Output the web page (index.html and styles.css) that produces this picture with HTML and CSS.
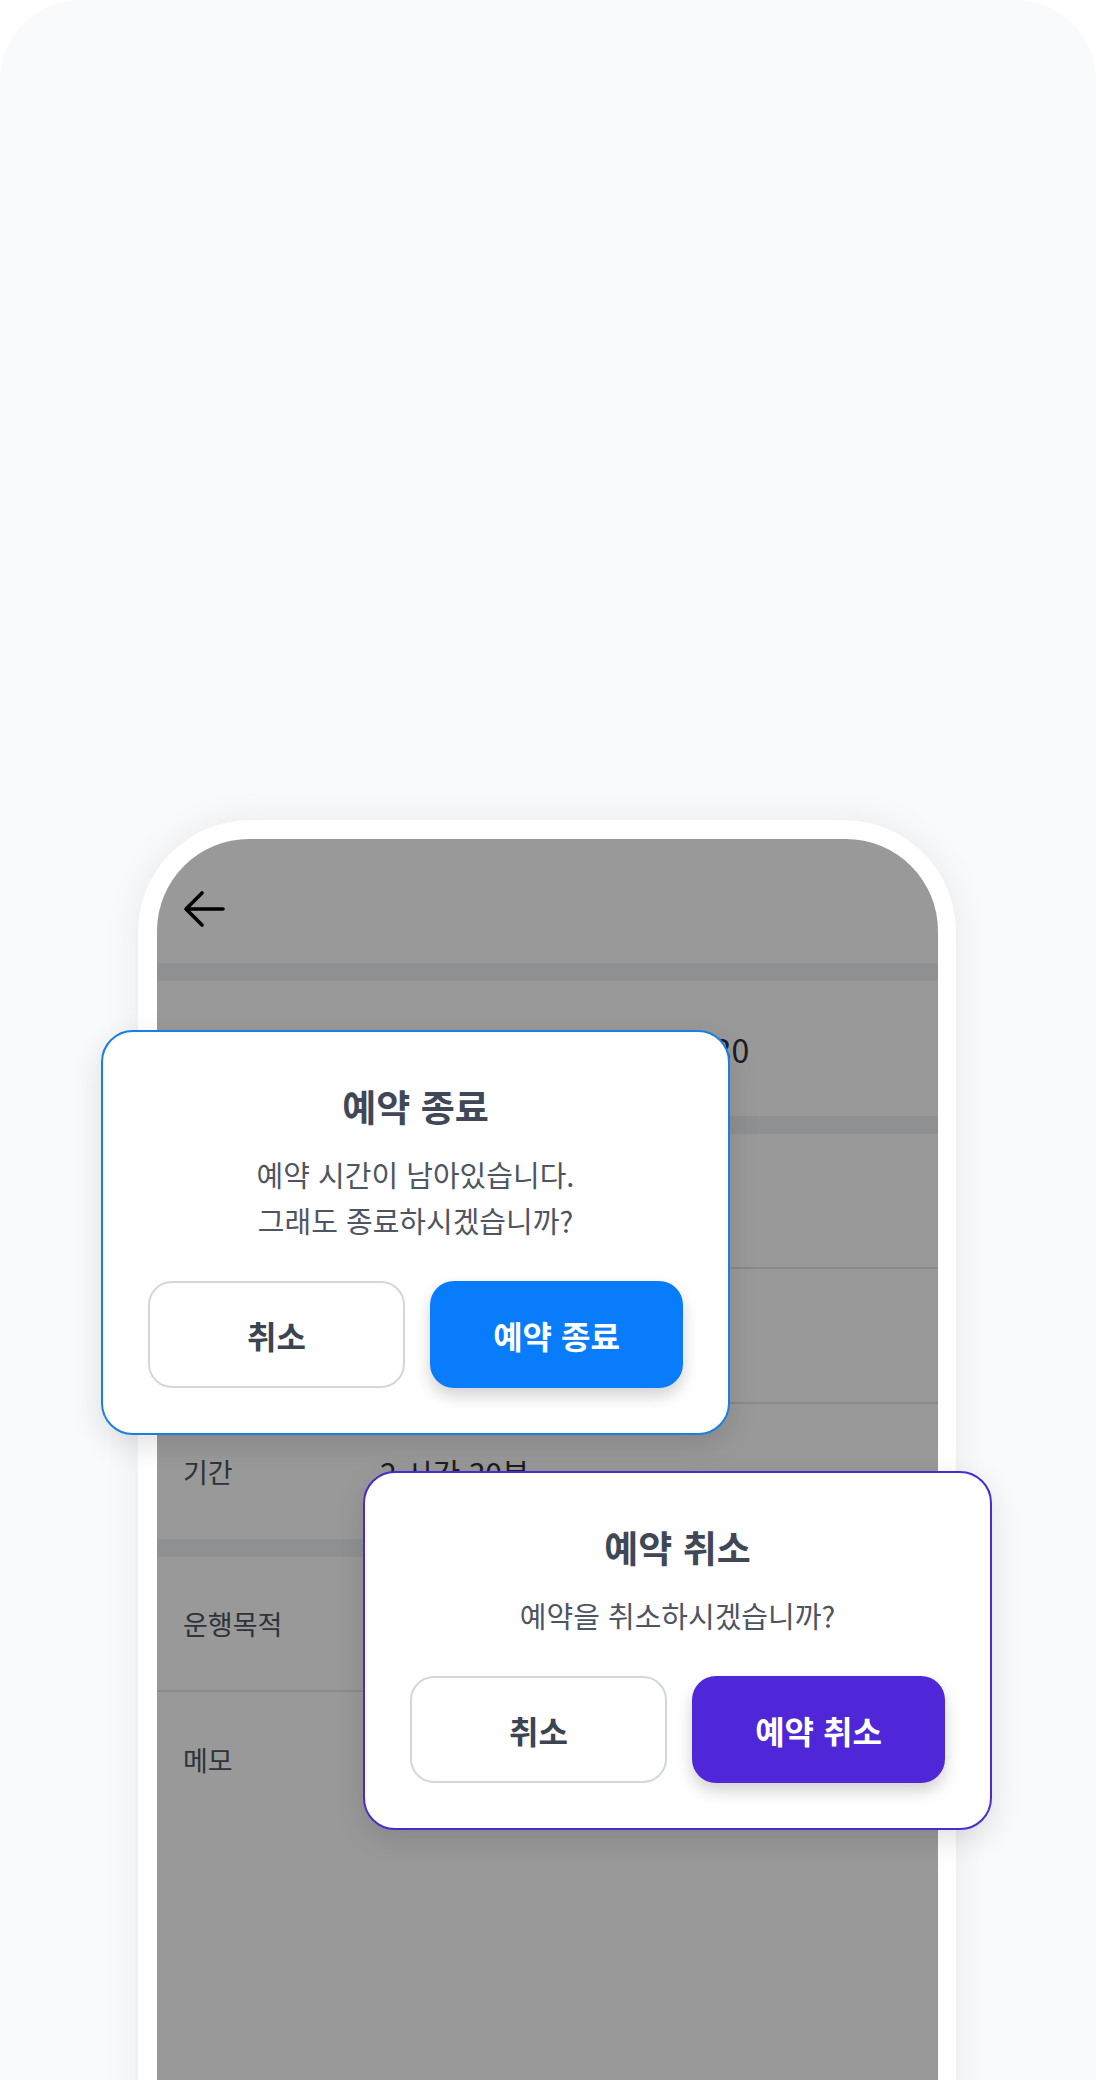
FILE: index.html
```html
<!DOCTYPE html>
<html lang="ko">
<head>
<meta charset="utf-8">
<title>예약 다이얼로그</title>
<link rel="stylesheet" href="styles.css">
</head>
<body>
<div class="page">
  <div class="phone">
    <div class="screen">
      <header class="topbar">
        <svg class="back" width="42" height="38" viewBox="0 0 42 38" aria-hidden="true">
          <path d="M40 19 H4 M19 3 L3 19 L19 35" fill="none" stroke="#000" stroke-width="3.6" stroke-linecap="round" stroke-linejoin="round"/>
        </svg>
      </header>
      <div class="sep"></div>
      <div class="row"><span class="label"></span><span class="value wide">2024.05.20 14:00 ~ 16:30</span></div>
      <div class="sep"></div>
      <div class="row line"></div>
      <div class="row line"></div>
      <div class="row"><span class="label">기간</span><span class="value">2 시간 30분</span></div>
      <div class="sep"></div>
      <div class="row line"><span class="label">운행목적</span></div>
      <div class="row"><span class="label">메모</span></div>
      <div class="overlay"></div>
    </div>
  </div>

  <div class="dialog dialog-end">
    <h2 class="title">예약 종료</h2>
    <p class="msg">예약 시간이 남아있습니다.<br>그래도 종료하시겠습니까?</p>
    <div class="actions">
      <button class="btn btn-ghost">취소</button>
      <button class="btn btn-blue">예약 종료</button>
    </div>
  </div>

  <div class="dialog dialog-cancel">
    <h2 class="title">예약 취소</h2>
    <p class="msg">예약을 취소하시겠습니까?</p>
    <div class="actions">
      <button class="btn btn-ghost">취소</button>
      <button class="btn btn-purple">예약 취소</button>
    </div>
  </div>
</div>
</body>
</html>
```

FILE: styles.css
```css
* { box-sizing: border-box; }

html, body {
  margin: 0;
  padding: 0;
  background: #ffffff;
  font-family: "Noto Sans CJK KR", "Noto Sans", sans-serif;
}

.page {
  position: relative;
  width: 1096px;
  height: 2080px;
  overflow: hidden;
  background: #f8fafb;
  border-radius: 80px 80px 0 0;
  padding-top: 820px;
}

.phone {
  margin-left: 138px;
  width: 818px;
  height: 1400px;
  background: #ffffff;
  border-radius: 112px 112px 0 0;
  padding: 19px 18px 0 19px;
  box-shadow: 0 0 36px rgba(0, 0, 0, 0.07);
}

.screen {
  position: relative;
  height: 100%;
  background: #ffffff;
  border-radius: 92px 92px 0 0;
  overflow: hidden;
}

.topbar {
  height: 124px;
  padding: 51px 0 0 26px;
}

.back { display: block; }

.sep {
  height: 18px;
  background: #eef1f3;
}

.row {
  display: flex;
  align-items: center;
  height: 135px;
  padding-left: 26px;
  font-size: 27px;
  line-height: 36px;
}

.row.line { border-bottom: 2px solid #e6e7e9; }

.label {
  width: 197px;
  flex: none;
  color: #4b5563;
}

.value {
  color: #333333;
  font-size: 30px;
}

.value.wide {
  font-size: 32px;
  letter-spacing: 0.2px;
}

.overlay {
  position: absolute;
  inset: 0;
  background: rgba(0, 0, 0, 0.4);
}

.dialog {
  position: absolute;
  width: 629px;
  background: #ffffff;
  border-radius: 32px;
  padding: 52px 45px 45px;
  text-align: center;
  box-shadow: 0 10px 30px rgba(0, 0, 0, 0.12);
}

.dialog-end {
  left: 101px;
  top: 1030px;
  border: 2px solid #1a7fe3;
}

.dialog-cancel {
  left: 363px;
  top: 1471px;
  border: 2px solid #4a2bcf;
}

.title {
  margin: 0;
  font-size: 37px;
  line-height: 44px;
  font-weight: 700;
  color: #404857;
}

.msg {
  margin: 23px 0 0;
  font-size: 29px;
  line-height: 46px;
  font-weight: 400;
  color: #4e5562;
}

.actions {
  display: flex;
  gap: 25px;
  margin-top: 38px;
}

.btn {
  flex: 1;
  height: 107px;
  border-radius: 24px;
  font-family: inherit;
  font-size: 32px;
  font-weight: 700;
  cursor: pointer;
}

.btn-ghost {
  background: #ffffff;
  border: 2px solid #d3d7dd;
  color: #3d4451;
}

.btn-blue {
  background: #087cfb;
  border: none;
  color: #ffffff;
  box-shadow: 0 8px 16px rgba(0, 0, 0, 0.18);
}

.btn-purple {
  background: #4f26d8;
  border: none;
  color: #ffffff;
  box-shadow: 0 8px 16px rgba(0, 0, 0, 0.18);
}
```
